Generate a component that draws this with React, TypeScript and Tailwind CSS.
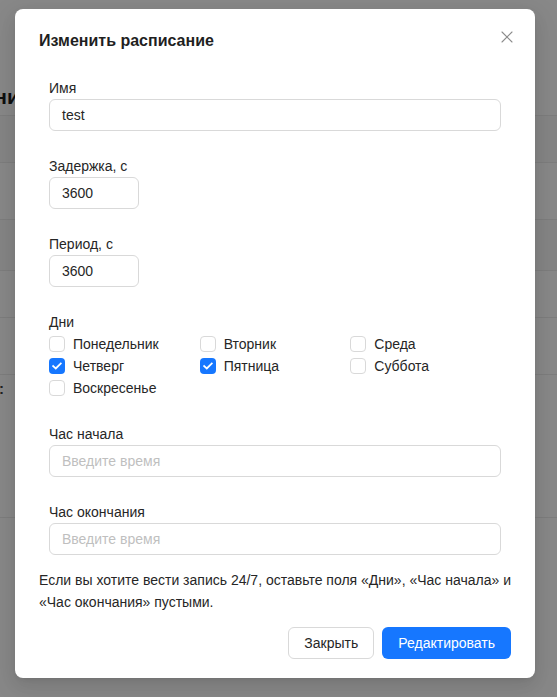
import { X } from 'lucide-react'

const days = [
    { name: 'Понедельник', checked: false },
    { name: 'Вторник', checked: false },
    { name: 'Среда', checked: false },
    { name: 'Четверг', checked: true },
    { name: 'Пятница', checked: true },
    { name: 'Суббота', checked: false },
    { name: 'Воскресенье', checked: false },
]

function Field(props: { label: string; value?: string; placeholder?: string; small?: boolean }) {
    const { label, value, placeholder, small } = props
    return (
        <div className="mb-6">
            <div className="h-[22px] text-sm leading-[22px] text-[#262626]">{label}</div>
            <div
                className={
                    small
                        ? 'flex h-8 w-[90px] items-center rounded-md border border-[#d9d9d9] px-3 text-sm text-[#262626]'
                        : 'flex h-8 w-full items-center rounded-md border border-[#d9d9d9] px-3 text-sm text-[#262626]'
                }
            >
                {value ? value : <span className="text-[#bfbfbf]">{placeholder}</span>}
            </div>
        </div>
    )
}

function Checkbox(props: { checked: boolean }) {
    if (props.checked) {
        return (
            <span className="flex h-4 w-4 items-center justify-center rounded bg-[#1677ff]">
                <svg width="10" height="8" viewBox="0 0 10 8" fill="none">
                    <path d="M1.2 4.1 3.8 6.5 8.8 1.5" stroke="white" strokeWidth="1.8" strokeLinecap="square" />
                </svg>
            </span>
        )
    }
    return <span className="h-4 w-4 rounded border border-[#d9d9d9] bg-white" />
}

export default function App() {
    return (
        <div className="relative h-[697px] w-[557px] overflow-hidden bg-[#888888] font-['Liberation_Sans',Arial,sans-serif]">
            {/* page behind the overlay */}
            <div className="pt-[79px]">
                <div className="ml-[-92px] h-9 text-[21px] font-bold leading-9 text-[#101010]">Расписани</div>
                <div className="border-b border-[#7d7d7d]" />
                <div className="h-[47px] border-b border-[#7d7d7d] bg-[#858585]" />
                <div className="h-[57px] border-b border-[#7d7d7d]" />
                <div className="h-[51px] border-b border-[#7d7d7d] bg-[#858585]" />
                <div className="h-[47px] border-b border-[#7d7d7d]" />
                <div className="h-[57px] border-b border-[#7d7d7d]" />
                <div className="h-[143px] border-b border-[#7d7d7d] pt-[2px]">
                    <span className="ml-[-1px] text-[15px] font-bold text-[#202020]">:</span>
                </div>
            </div>

            {/* modal */}
            <div className="absolute left-[15px] top-[9px] w-[520px] rounded-lg bg-white px-6 pb-[19px] pt-5 shadow-[0_6px_16px_rgba(0,0,0,0.08),0_3px_6px_-4px_rgba(0,0,0,0.12),0_9px_28px_8px_rgba(0,0,0,0.05)]">
                <button className="absolute right-[17px] top-[17px] flex h-[22px] w-[22px] items-center justify-center text-[#8c8c8c]">
                    <X size={20} strokeWidth={1.3} />
                </button>
                <div className="h-6 text-base font-bold leading-6 text-[#1f1f1f]">Изменить расписание</div>

                <div className="px-[10px] pt-6">
                    <Field label="Имя" value="test" />
                    <Field label="Задержка, с" value="3600" small />
                    <Field label="Период, с" value="3600" small />

                    <div className="mb-6">
                        <div className="h-[22px] text-sm leading-[22px] text-[#262626]">Дни</div>
                        <div className="grid grid-cols-3">
                            {days.map(d => (
                                <div key={d.name} className="flex h-[22px] items-center gap-2 text-sm text-[#262626]">
                                    <Checkbox checked={d.checked} />
                                    <span>{d.name}</span>
                                </div>
                            ))}
                        </div>
                    </div>

                    <Field label="Час начала" placeholder="Введите время" />
                    <div className="mb-[14px]">
                        <div className="h-[22px] text-sm leading-[22px] text-[#262626]">Час окончания</div>
                        <div className="flex h-8 w-full items-center rounded-md border border-[#d9d9d9] px-3 text-sm text-[#bfbfbf]">
                            Введите время
                        </div>
                    </div>
                </div>

                <p className="text-sm leading-[22px] text-[#262626]">
                    Если вы хотите вести запись 24/7, оставьте поля «Дни», «Час начала» и «Час окончания» пустыми.
                </p>

                <div className="mt-[14px] flex justify-end gap-2">
                    <button className="h-8 rounded-md border border-[#d9d9d9] bg-white px-[15px] text-sm text-[#262626]">
                        Закрыть
                    </button>
                    <button className="h-8 rounded-md bg-[#1677ff] px-4 text-sm text-white">Редактировать</button>
                </div>
            </div>
        </div>
    )
}
